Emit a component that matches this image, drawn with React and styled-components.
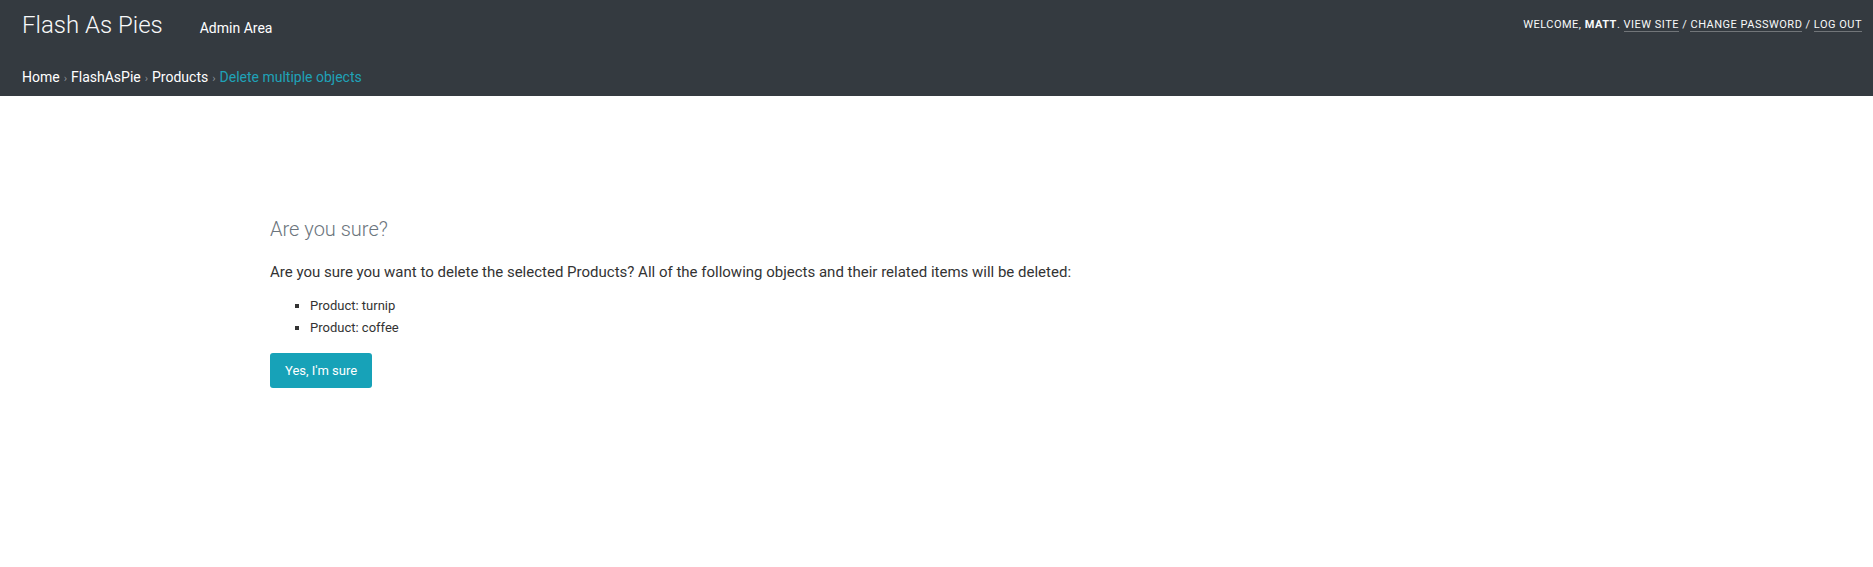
import React from "react";
import styled, { createGlobalStyle } from "styled-components";

const GlobalStyle = createGlobalStyle`
  html, body {
    margin: 0;
    padding: 0;
    background: #ffffff;
    font-family: Roboto, "Liberation Sans", sans-serif;
  }
`;

const Header = styled.header`
  background-color: #343a40;
  color: #ffffff;
  height: 96px;
  box-sizing: border-box;
  padding: 0 11px 0 22px;
`;

const TopRow = styled.div`
  display: flex;
  align-items: flex-start;
  justify-content: space-between;
  height: 69px;
`;

const Branding = styled.div`
  display: flex;
  align-items: baseline;
  padding-top: 11px;
`;

const SiteName = styled.h1`
  margin: 0;
  font-size: 24px;
  font-weight: 300;
  color: #f8f9fa;
`;

const AreaName = styled.span`
  margin-left: 37px;
  font-size: 14px;
  font-weight: 400;
`;

const UserTools = styled.div`
  padding-top: 18px;
  font-size: 11px;
  letter-spacing: 0.5px;
  text-transform: uppercase;
  color: #f8f9fa;

  strong {
    font-weight: 700;
  }
`;

const ToolLink = styled.a`
  color: #f8f9fa;
  text-decoration: none;
  border-bottom: 1px solid rgba(255, 255, 255, 0.3);
`;

const Breadcrumbs = styled.nav`
  font-size: 14px;
  line-height: 16px;
  color: #ffffff;
`;

const Crumb = styled.a`
  color: #ffffff;
  text-decoration: none;
`;

const Sep = styled.span`
  color: #8a9099;
  font-size: 11px;
  margin: 0 4px;
`;

const Current = styled.span`
  color: #1fa2b8;
`;

const Main = styled.main`
  padding: 121px 0 0 270px;
  color: #333;
`;

const Heading = styled.h2`
  margin: 0 0 22px;
  font-size: 20px;
  font-weight: 300;
  color: #6c757d;
`;

const Lead = styled.p`
  margin: 0 0 17px;
  font-size: 15px;
  color: #333;
`;

const ObjectList = styled.ul`
  margin: 0 0 18px;
  padding-left: 40px;
  list-style: square;
  font-size: 13px;

  li + li {
    margin-top: 6.5px;
  }
`;

const Button = styled.button`
  background-color: #17a2b8;
  color: #ffffff;
  border: none;
  border-radius: 3px;
  font-family: inherit;
  font-size: 13px;
  height: 35px;
  padding: 0 15px;
`;

export default function App() {
  return (
    <>
      <GlobalStyle />
      <Header>
        <TopRow>
          <Branding>
            <SiteName>Flash As Pies</SiteName>
            <AreaName>Admin Area</AreaName>
          </Branding>
          <UserTools>
            Welcome, <strong>Matt</strong>. <ToolLink href="#">View site</ToolLink> /{" "}
            <ToolLink href="#">Change password</ToolLink> / <ToolLink href="#">Log out</ToolLink>
          </UserTools>
        </TopRow>
        <Breadcrumbs>
          <Crumb href="#">Home</Crumb>
          <Sep>›</Sep>
          <Crumb href="#">FlashAsPie</Crumb>
          <Sep>›</Sep>
          <Crumb href="#">Products</Crumb>
          <Sep>›</Sep>
          <Current>Delete multiple objects</Current>
        </Breadcrumbs>
      </Header>
      <Main>
        <Heading>Are you sure?</Heading>
        <Lead>
          Are you sure you want to delete the selected Products? All of the following objects and their related items will be deleted:
        </Lead>
        <ObjectList>
          <li>Product: turnip</li>
          <li>Product: coffee</li>
        </ObjectList>
        <Button>Yes, I'm sure</Button>
      </Main>
    </>
  );
}
